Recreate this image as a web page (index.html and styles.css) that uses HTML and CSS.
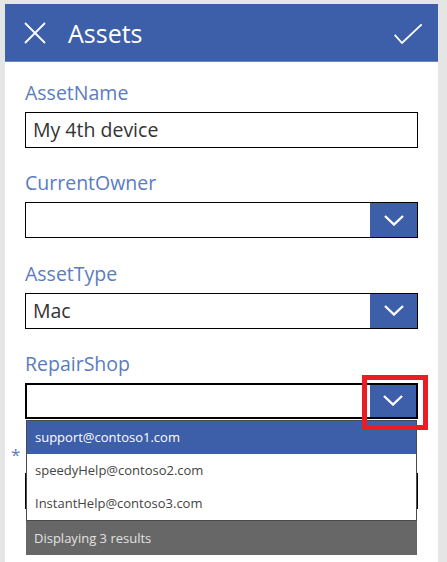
FILE: index.html
```html
<!DOCTYPE html>
<html lang="en">
<head>
<meta charset="utf-8">
<title>Assets</title>
<link rel="stylesheet" href="styles.css">
</head>
<body>
<div class="app">
  <header class="titlebar">
    <svg class="icon-close" width="22" height="22" viewBox="0 0 22 22"><path d="M1 1 L21 21 M21 1 L1 21" fill="none" stroke="#fff" stroke-width="1.8"/></svg>
    <h1 class="title">Assets</h1>
    <svg class="icon-check" width="30" height="22" viewBox="0 0 30 22"><path d="M1.7 12.8 L9 21 L28.7 2.3" fill="none" stroke="#fff" stroke-width="1.8"/></svg>
  </header>
  <main class="form">
    <div class="field">
      <div class="label">AssetName</div>
      <div class="box"><span class="value">My 4th device</span></div>
    </div>
    <div class="field">
      <div class="label">CurrentOwner</div>
      <div class="box combo">
        <span class="value"></span>
        <span class="btn"><svg width="20" height="11" viewBox="0 0 20 11"><path d="M1 1 L10 9.5 L19 1" fill="none" stroke="#fff" stroke-width="2.4"/></svg></span>
      </div>
    </div>
    <div class="field">
      <div class="label">AssetType</div>
      <div class="box combo">
        <span class="value">Mac</span>
        <span class="btn"><svg width="20" height="11" viewBox="0 0 20 11"><path d="M1 1 L10 9.5 L19 1" fill="none" stroke="#fff" stroke-width="2.4"/></svg></span>
      </div>
    </div>
    <div class="field">
      <div class="label">RepairShop</div>
      <div class="box combo focused">
        <span class="value"></span>
        <span class="btn"><svg width="20" height="11" viewBox="0 0 20 11"><path d="M1 1 L10 9.5 L19 1" fill="none" stroke="#fff" stroke-width="2.4"/></svg></span>
        <div class="highlight"></div>
        <div class="dropdown">
          <ul class="options">
            <li class="option selected">support@contoso1.com</li>
            <li class="option">speedyHelp@contoso2.com</li>
            <li class="option">InstantHelp@contoso3.com</li>
          </ul>
          <div class="results">Displaying 3 results</div>
        </div>
      </div>
    </div>
    <div class="field">
      <div class="label"><span class="req">*</span></div>
      <div class="box"><span class="value"></span></div>
    </div>
  </main>
</div>
</body>
</html>
```

FILE: styles.css
```css
* { box-sizing: border-box; }
html, body { margin: 0; padding: 0; }
body {
  background: #e5e5e5;
  padding: 4px 9px 0 5px;
  font-family: "Open Sans", "Noto Sans", sans-serif;
  height: 562px;
  overflow: hidden;
}
.app {
  width: 433px;
  height: 558px;
  background: #fff;
}
.titlebar {
  height: 58px;
  background: #3d5ea8;
  border-bottom: 1px solid #6a86c4;
  display: flex;
  align-items: center;
  padding-left: 19px;
  padding-right: 15px;
  color: #fff;
}
.icon-close { display: block; flex: none; }
.title {
  margin: 0 0 0 22px;
  font-size: 25px;
  font-weight: 400;
  line-height: 34px;
  color: #fff;
}
.icon-check { display: block; margin-left: auto; flex: none; }
.form {
  padding: 19px 20px 0 20px;
}
.field {
  margin-bottom: 23.33px;
}
.label {
  font-size: 19.5px;
  line-height: 24px;
  height: 24px;
  color: #5b7cbf;
  margin-bottom: 7px;
}
.req {
  margin-left: -14px;
  font-size: 17px;
  color: #5b7cbf;
}
.box {
  width: 393px;
  height: 36px;
  border: 1px solid #000;
  display: flex;
  position: relative;
}
.value {
  flex: 1;
  padding-left: 7px;
  font-size: 19.5px;
  line-height: 34px;
  color: #333;
}
.btn {
  width: 47px;
  flex: none;
  background: #3d5ea8;
  display: flex;
  align-items: center;
  justify-content: center;
}
.btn svg { display: block; }
.focused { border: 2px solid #000; }
.focused .btn { width: 46px; }
.focused .value { line-height: 32px; padding-left: 6px; }
.highlight {
  position: absolute;
  left: 335px;
  top: -10px;
  width: 66px;
  height: 55px;
  border: 5px solid #ea1c24;
  z-index: 3;
}
.dropdown {
  position: absolute;
  left: -1px;
  top: calc(100% + 3px);
  width: 391px;
  z-index: 2;
}
.options {
  list-style: none;
  margin: 0;
  padding: 0;
  border: 1px solid #4a4a4a;
  background: #fff;
}
.option {
  height: 33px;
  line-height: 33px;
  padding-left: 8px;
  font-size: 13px;
  color: #444;
}
.option.selected {
  background: #3d5ea8;
  color: #fff;
}
.results {
  height: 34px;
  line-height: 34px;
  background: #676767;
  color: #e2e2e2;
  font-size: 13px;
  padding-left: 8px;
}
```
